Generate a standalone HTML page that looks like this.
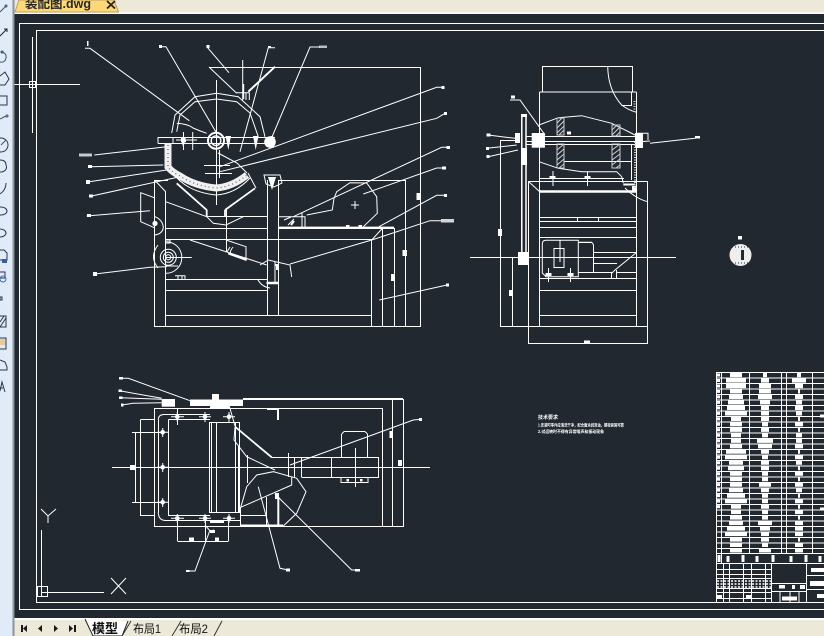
<!DOCTYPE html>
<html lang="zh">
<head>
<meta charset="utf-8">
<title>装配图.dwg</title>
<style>
html,body{margin:0;padding:0;background:#212830}
#a{position:relative;width:824px;height:636px;overflow:hidden;font-family:"Liberation Sans","Noto Sans CJK SC",sans-serif}
svg{position:absolute;left:0;top:0}
</style>
</head>
<body>
<div id="a">
<svg width="824" height="636" viewBox="0 0 824 636" xmlns="http://www.w3.org/2000/svg">
<rect width="824" height="636" fill="#212830"/>

<!-- CAD drawing -->
<g fill="none" stroke="#fff" stroke-width="1">
<!-- frames -->
<path d="M824 23.5H19.5V609.5H824M824 30.5H36.5V602.5H824" shape-rendering="crispEdges"/>
<!-- crosshair -->
<path d="M32.5 37V133M14 84.5H80" shape-rendering="crispEdges"/>
<rect x="29.5" y="81.5" width="6" height="6"/>
<!-- UCS -->
<path d="M41.5 530V597M41.5 592.5H104" shape-rendering="crispEdges"/>
<rect x="37.5" y="586.5" width="10" height="10"/>
<path d="M41 509L48 516L56 509M48 516V523M111 578L126 594M126 578L111 594"/>

<!-- FRONT VIEW: frame -->
<path shape-rendering="crispEdges" d="M154.5 180V326.5H420.5V67.5H209.5M165.5 191V326M278 180.5H405.5V326M371.5 239V326M382.5 228V326M394.5 228V326M154 180.5H168M165.5 315.5H372M165.5 290.5H267M165.5 279.5H267M165.5 239.5H372M165.5 228.5H267M267.5 180V316M278.5 180V316M207 216.5H267M226.5 210V252"/>
<path d="M154.5 180L165.5 191.5"/>
<path stroke-width="2.4" d="M278 227.8H394M266.5 283H278"/>
<!-- chute -->
<path stroke-width="1.8" d="M176.7 183.3L206.7 210V216.7M225 210L255 188.3M225 210V217"/>
<path d="M165.7 201.7L206.7 216.7L213.3 223.3L226 225L243.3 216.7"/>
<path d="M154.3 197.7L140.7 192.7V221.7L154.3 227.7M155 216.7Q163 220 163.3 228Q162 234 155 235"/>
<circle cx="155" cy="223.5" r="2.6" fill="#fff" stroke="none"/>
<!-- gear / pulley -->
<path d="M166 241.7A15.7 15.7 0 0 1 166 273.3M166 266H178M158 245Q149 257 158 268"/>
<circle cx="168.3" cy="257.3" r="8"/><circle cx="168.3" cy="257.3" r="5"/><circle cx="168.3" cy="257.3" r="2.5"/>
<path d="M166 257.5H191.7M165 240H170V243H165M175 275.7H185V279M178 275.7V279M182 275.7V279"/>
<path d="M190 240L266.7 265M226 240L246 246.7V258M230 247L227 252M233 247Q229 252 231 255"/>
<path stroke-width="2.2" d="M228.3 253.3L246.7 260"/>
<path d="M260 265L268.3 260L290 265L291.7 277M275 262V283M258 280Q262 287 270 288"/>
<path stroke-width="2" d="M275 265H277V270"/>
<!-- hopper -->
<path d="M209 67L236.7 93.3M242.7 60V100M236.7 92.7H249.3V100M243.7 84V99M246 93V100"/>
<path stroke-width="2" d="M275 66.7L248.3 91.7"/>
<!-- drum -->
<path d="M171.7 133L175 115L195 96.7L216.7 93.3L238.3 96.7L260 116.7L265 136.7M176.7 131.7L180 115L195 101.7L216.7 99L236.7 101.7L250 113L258.3 136.7M176.7 123.3Q188 124 193 128Q200 131 206.7 133.3"/>
<path shape-rendering="crispEdges" d="M216.5 80V205M158 137.5H275M158 143.5H275M158 137V143.5M173 137V144M204 165.5H230M205 173.5H232M219.5 150V178"/>
<circle cx="216" cy="140.7" r="8" stroke-width="2"/><circle cx="216" cy="140.7" r="4.8" stroke-width="1.4"/>
<path d="M183.5 132V150M192.7 132V150M176 140H197M218 153L237 163L247 173"/>
<path stroke-width="2.4" d="M181 141H186M272 136V148"/>
<path fill="#fff" stroke="none" d="M225.5 136H231L228.3 150ZM253 136H258.5L255.7 150ZM180.5 137H186L183.3 148ZM268 177H276L272 190Z"/>
<circle cx="270" cy="142" r="5.8" fill="#fff" stroke="none"/>
<path d="M264 175H280L282 183L274 187L266 184Z"/>
<!-- screen band -->
<path stroke="#f0f0f0" stroke-width="7" d="M168 143V167Q172 172 180 176Q195 186 216 188Q232 187 247 175"/>
<path stroke="#6f767c" stroke-width="1.4" stroke-dasharray="1 3" d="M168 145V167Q172 172 180 176Q195 186 216 188Q232 187 247 175"/>
<path d="M172 172Q186 192 216 195Q235 194 250 178M248 173L256 188"/>
<!-- leaders front -->
<path d="M85 48.3H90L189.3 120.7M159.3 46.7H166L216.7 133.3M207.3 47.3L229 72.7M268.3 47.7H275M268.3 47.7L240 151.7M320 47H310L272 137M94.3 155L166.7 146.7M90.7 166.7L163.3 165M89.3 181.7L166.7 170M91.7 196L180 176.7M86.7 216L150 210.7M95 274L150 267.3L166.7 266.7"/>
<path d="M220 166.7L436.7 87.3H442.7M220 171.7L436.7 118.3L445 113.3M293.3 216.7L441.7 147.3H448.3M363.3 194L436.7 168H443.3M379 226.7L436.7 195.3H445M290 264L371.7 240L430 220.7H441.7M371.7 240L382.7 228M379.3 300L447 285"/>
<g fill="#fff" stroke="none">
<rect x="79" y="153.5" width="13" height="3" opacity=".75"/><rect x="88" y="165" width="4" height="3"/><rect x="86" y="180" width="4" height="4"/><rect x="89" y="194.5" width="4" height="3"/><rect x="87" y="214" width="4" height="3"/><rect x="93" y="272" width="4" height="4"/>
<rect x="87" y="41" width="1.5" height="5"/><rect x="159" y="45" width="3" height="3"/><rect x="206.5" y="45" width="3" height="3"/><rect x="268" y="46" width="3" height="2"/><rect x="319" y="45.5" width="8" height="2.5" opacity=".7"/>
<rect x="441.5" y="86" width="3" height="3"/><rect x="444" y="112" width="3" height="3"/><rect x="446.5" y="146" width="3.5" height="3"/><rect x="442" y="166.5" width="4" height="3"/><rect x="444" y="194" width="3" height="3"/><rect x="441" y="219" width="13" height="3.5" opacity=".8"/><rect x="446" y="283.5" width="3" height="3"/>
<rect x="416.5" y="193" width="4" height="7"/><rect x="402.5" y="250" width="4.5" height="6"/><rect x="391" y="274" width="4" height="7"/>
<rect x="346" y="225" width="3.5" height="2.5"/><rect x="358.5" y="225" width="3.5" height="2.5"/>
</g>
<!-- motor front -->
<path d="M306.7 215L332.3 210L334 198.3L336.7 191.7L350 182.7L366.7 183L376.7 196.7L377.3 213.3L363.3 226.7M351 205H359M355 201V209M278.5 216.7H305V226.7M302 213V227M284 220L291 217M288 225L294 219"/>
<path stroke-width="2" d="M291 225L294 221"/>

<!-- RIGHT VIEW -->
<path shape-rendering="crispEdges" d="M542.5 92V66.5H632.5V92M539.5 92H636.5M539.5 92V326M636.5 92V326M528.5 181V343.5M647.5 181V343.5M528.5 181.5H647.5M500 326.5H647.5M528 343.5H648M539 178.5H624M539 217.5H636M539 221.5H636M539 227.5H636M539 237.5H636M539 278.5H636M539 290.5H636M539 315.5H636M577.5 217V221M598.5 217V221M470 257.5H676M526 136.5H638M526 141.5H638M526 144.5H638M564 161.5H632M631.5 144V180M621.5 105.5H631.5V92M500.5 140V326.5M512.5 257V326M500 140.5H516M554 248.5H564V267.5H554ZM560 240V262M578 242.5H591M578 272.5H612M593.5 245V272M593 252.5H636M593 263.5H617M611.5 272V278M616.5 270V278M616 272.5H636M553 171V186M587.5 172V186M548.5 268V282M570.5 268V282"/>
<path d="M607.7 66Q608 90 621.7 105Q628 110 636.7 112.3M528.5 181.5L539.5 191.5M539 125L558.3 117.7L581.7 115.7L611.7 123.3L635 135M539 161.7L558.3 168.3L581.7 171.7L616.7 171.7L621.7 176.7L623.3 183M625 188Q635 198 647.3 201.7M636.7 252.3L615 270L611.7 273.3M542.3 244Q542.3 240.3 546 240.3H578.3V276.7H546L542.3 273V244M578.3 242.3H591.7L593.7 245"/>
<path stroke-width="2.6" d="M539 191.5H636.7"/>
<path stroke-width="2" d="M623.3 184.5H635"/>
<path stroke-width="1.5" d="M521.8 115V262M526 115V262"/>
<g fill="#fff" stroke="none">
<rect x="521" y="114" width="6" height="3"/><rect x="521" y="148" width="6" height="17"/><rect x="518" y="252" width="10" height="13"/><rect x="531.7" y="133" width="13.3" height="14.7"/><rect x="515" y="133" width="5" height="10"/><rect x="635" y="133" width="8" height="15"/>
<rect x="549.5" y="176" width="6" height="3"/><rect x="584.5" y="176" width="6" height="3"/><rect x="545.5" y="273" width="6" height="3"/><rect x="567.5" y="273" width="6" height="3"/>
<rect x="498" y="229" width="4" height="7"/><rect x="509" y="290" width="3.5" height="6"/><rect x="584" y="340.5" width="6" height="3"/><rect x="567" y="131.5" width="4" height="3"/><rect x="632" y="186" width="5" height="6"/>
<rect x="486.5" y="133.5" width="4" height="3"/><rect x="486" y="147" width="3" height="3"/><rect x="486.5" y="155" width="3" height="3"/><rect x="511" y="95.5" width="4" height="3"/><rect x="695" y="136" width="5" height="2.5"/>
</g>
<path stroke="#cfd2d5" stroke-width="2" stroke-dasharray="1 1.5" d="M634.5 101V112M635 142V188"/>
<g stroke="#c8cbce" fill="none" stroke-width="1">
<path d="M557 118H564V135H557ZM557 144H564V168H557ZM612 125H620V136H612ZM612 144H620V168H612Z"/>
</g>
<g stroke="#cfd2d5" stroke-width="1">
<path d="M557 123L562 118M557 128L564 121M557 133L564 126M559 135L564 130M557 150L564 144M557 155L564 149M557 160L564 154M557 165L564 159M559 168L564 164M612 130L617 125M612 135L620 127M616 136L620 132M612 150L620 144M612 155L620 149M612 160L620 154M612 165L620 159M616 168L620 165"/>
</g>
<path d="M510 100H520L545 135M488 135L515 138.3M486.7 148.3L516.7 145M488.3 156.7L518 150M650 143.3L695 138.3L700 137M637 133.3H648V140M643 141.5L650 141"/>

<!-- detail circle -->
<circle cx="740.5" cy="255" r="11" fill="#eee" stroke="none"/>
<rect x="741" y="250" width="3" height="10" fill="#212830" stroke="none"/>
<path stroke="#212830" stroke-dasharray="1 2" d="M732 247H749M732 263H749"/>
<rect x="738" y="236" width="4" height="3.5" fill="#fff" stroke="none"/>

<!-- TOP VIEW -->
<path shape-rendering="crispEdges" d="M154.5 408.5H382.5V526.5H154.5ZM243 399.5H403.5V526.5H382M392.5 399V526M112 467.5H430M140.5 419.5H154M140.5 419.5V515.5H154M132 432.5H163M132 502.5H163M135.5 432V502M168.5 419.5H210M168.5 419.5V515.5H210M175 414.5H210M175 520.5H240M209.5 422.5H239.5V512.5H209.5ZM211.5 422V512M216.5 422V512M235.5 422V512M238.5 446V512M247.5 455V483M271.5 457.5H378.5V477.5H301.5M378.5 457V477M331.5 457V477M301.5 457V477M294.5 457V477M288.5 453V477M341.5 457V434M367.5 457V434M344 431.5H365M341 477V482.5H368V477M355.5 448V487M177.5 520V541M228.5 520V541M205.5 520V541M177.5 541.5H228.5M240.5 507V526M240.5 515.5H266M266.5 497V526M278 420V409.5H267M158.5 420V512M177.5 409V425"/>
<path stroke-width="2" d="M243 399H403M278 409V420M278.3 497V526M240.5 525.5H283"/>
<path d="M158.3 420Q158.3 414.5 164 414.5H176M158.3 512Q158.3 520.5 166 520.5H176M341.7 434L344 431.5M365 431.5L367.5 434"/>
<path stroke-width="1.8" d="M235 426.7L271.7 457.3"/>
<path d="M235 426.7L234 440L246.7 456.7L275 470M240.7 507.3L246.7 486.7L256.7 475L273.3 471.7L296.7 478.3L306 491.7L296.7 513.3L283.3 526M240.7 507.3L291.7 485V476.7M229 405L235 426M258.3 486.7L280 568.3L288 570M275 494L351.7 570H358M290 465L413.3 420L421.7 419.3M210 530L195 571H186M120 378.3H128.3L190 400.7M119.3 390.7L161.7 398.3M120 397.7L161.7 399.3M121.7 405L133 403.3L161.7 402.7M205 525L210 531L214 530"/>
<g fill="#fff" stroke="none">
<rect x="190" y="399.5" width="53" height="6.5"/><rect x="161.7" y="399" width="13.3" height="7.7"/><rect x="212" y="394" width="7" height="12"/><rect x="210" y="406" width="20" height="3"/>
<rect x="210" y="520" width="14" height="3"/><rect x="210" y="530" width="5" height="3"/><rect x="189" y="537.5" width="5" height="3.5"/><rect x="215" y="537.5" width="4" height="3.5"/><rect x="130" y="465" width="5" height="5"/><rect x="389.5" y="431" width="3" height="7"/><rect x="398" y="460" width="4" height="6"/>
<rect x="119" y="377" width="4" height="2.5"/><rect x="118.5" y="389.5" width="3.5" height="2.5"/><rect x="119" y="396.5" width="3.5" height="2.5"/><rect x="121" y="403.5" width="2.5" height="3"/><rect x="186" y="570" width="3.5" height="2"/><rect x="286" y="568.5" width="4" height="3"/><rect x="355" y="569" width="5" height="2.5"/><rect x="419" y="418" width="3" height="3"/><rect x="346.5" y="479" width="2.5" height="2.5"/><rect x="360" y="479" width="2.5" height="2.5"/>
<rect x="275" y="493" width="4" height="6"/>
</g>
<g>
<path d="M171 416.7H184M177.3 412V422M199 416.7H211M205 412V422M223 416.7H235M229 412V422M171 518.3H184M177.3 514V523M199 518.3H211M205 514V523M223 518.3H235M229 514V523M157 432.3H168M162.7 428V437M157 467.3H168M162.7 463V472M157 502.3H168M162.7 498V507"/>
<g fill="#fff" stroke="none"><circle cx="177.3" cy="416.7" r="2.3"/><circle cx="205" cy="416.7" r="2.3"/><circle cx="229" cy="416.7" r="2.3"/><circle cx="177.3" cy="518.3" r="2.3"/><circle cx="205" cy="518.3" r="2.3"/><circle cx="229" cy="518.3" r="2.3"/><circle cx="162.7" cy="432.3" r="2.3"/><circle cx="162.7" cy="467.3" r="2.3"/><circle cx="162.7" cy="502.3" r="2.3"/></g>
</g>

<!-- TABLE -->
<path shape-rendering="crispEdges" d="M716.5 372V602M721.5 372V563M749.5 372V553M781.5 372V553M786.5 372V553M812.5 372V553"/>
<path shape-rendering="crispEdges" d="M716 372.5H824M716 378H824M716 383.5H824M716 389H824M716 394.5H824M716 400H824M716 405.5H824M716 411H824M716 416.5H824M716 422H824M716 427.5H824M716 433H824M716 438.5H824M716 444H824M716 449.5H824M716 455H824M716 460.5H824M716 466H824M716 471.5H824M716 477H824M716 482.5H824M716 488H824M716 493.5H824M716 499H824M716 504.5H824M716 510H824M716 515.5H824M716 521H824M716 526.5H824M716 532H824M716 537.5H824M716 543H824M716 548.5H824M716 553.5H824M716 563.5H824"/>
<g stroke-width="4.2" stroke="#fff">
<path d="M730 375h12M726 380.5h20M726 386h20M730 391.4h12M729 396.9h14M728 402.4h16M727 407.9h18M725 413.4h22M731 418.9h10M730 424.3h12M730 429.8h12M731 435.3h10M731 440.8h10M730 446.3h12M726 451.7h20M725 457.2h22M729 462.7h14M728 468.2h16M730 473.7h12M730 479.2h12M730 484.6h12M729 490.1h14M727 495.6h18M725 501.1h22M731 506.6h10M731 512h10M730 517.5h12M729 523h14M727 528.5h18M725 534h22M730 539.5h12M730 544.9h12M730 550.4h12"/>
<path d="M763 375h4M761 380.5h8M759 386h12M759 391.4h12M758 396.9h14M760 402.4h10M761 407.9h8M761 413.4h8M761 418.9h8M762 424.3h6M761 429.8h8M762 435.3h6M757 440.8h16M758 446.3h14M761 451.7h8M762 457.2h6M761 462.7h8M761 468.2h8M762 473.7h6M762 479.2h6M759 484.6h12M761 490.1h8M762 495.6h6M762 501.1h6M761 506.6h8M762 512h6M762 517.5h6M758 523h14M760 528.5h10M761 534h8M761 539.5h8M762 544.9h6M759 550.4h12"/>
<path d="M797 375h4M792 380.5h14M795 386h8M798 391.4h2M795 396.9h8M796 402.4h6M795 407.9h8M796 413.4h6M798 418.9h2M795 424.3h8M798 429.8h2M796 435.3h6M796 440.8h6M795 446.3h8M798 451.7h2M795 457.2h8M796 462.7h6M798 468.2h2M795 473.7h8M798 479.2h2M795 484.6h8M796 490.1h6M798 495.6h2M795 501.1h8M798 506.6h2M795 512h8M798 517.5h2M795 523h8M795 528.5h8M795 534h8M798 539.5h2M795 544.9h8M795 550.4h8"/>
<path d="M717 375h3M717 380.5h3M717 386h3M717 391.4h3M717 396.9h3M717 402.4h3M717 407.9h3M717 413.4h3M717 418.9h3M717 424.3h3M717 429.8h3M717 435.3h3M717 440.8h3M717 446.3h3M717 451.7h3M717 457.2h3M717 462.7h3M717 468.2h3M717 473.7h3M717 479.2h3M717 484.6h3M717 490.1h3M717 495.6h3M717 501.1h3M717 506.6h3" stroke-width="3"/>
<path d="M820 416h4M820 509h4" stroke-width="3"/>
</g>
<!-- table header ticks -->
<path stroke-width="3" d="M719 555V562M728 556V562M743 555V562M757 556V562M773 555V562M791 556V562M806 555V562M820 556V562"/>
<!-- title block -->
<path shape-rendering="crispEdges" d="M716 569.5H772M716 574.5H772M716 578.5H772M716 588.5H772M716 592.5H772M716 598.5H772M716 602.5H824M723.5 563V602M729.5 563V602M743.5 563V602M751.5 563V602M765.5 563V602M771.5 563V602M806.5 563V602M807 575.5H824M807 589.5H824M772 583.5H807M772 591.5H807M780 591V602M790 591V602M799 591V602"/>
<g stroke="#fff" stroke-width="1.6" stroke-dasharray="2 1.5">
<path d="M717 581H771M717 584H771M717 587H771"/>
</g>
<g fill="#fff" stroke="none">
<rect x="717" y="595" width="5" height="3"/><rect x="746" y="595" width="5" height="3"/><rect x="779" y="585" width="6" height="3.5"/><rect x="792" y="585" width="3" height="4"/><rect x="800" y="585" width="5" height="4"/>
<rect x="782" y="596.5" width="15" height="4"/><rect x="811" y="568" width="13" height="4"/><rect x="810" y="581" width="14" height="5"/><rect x="817" y="594" width="7" height="4"/>
</g>
</g>

<!-- tech notes -->
<g fill="#fff" font-family="'Liberation Sans','Noto Sans CJK SC',sans-serif" font-weight="700">
<text x="538" y="419" font-size="5">技术要求</text>
<text x="538" y="426.5" font-size="4.2" textLength="86" lengthAdjust="spacingAndGlyphs">1.安装时零件应清洗干净，配合面涂润滑油，螺栓紧固可靠</text>
<text x="538" y="433" font-size="4.2" textLength="66" lengthAdjust="spacingAndGlyphs">2.试运转时不得有异常噪声和振动现象</text>
</g>
</svg>

<!-- top chrome -->
<div style="position:absolute;left:0;top:0;width:824px;height:12px;background:#ece9d8"></div>
<div style="position:absolute;left:0;top:12px;width:824px;height:2px;background:#f8f8f4"></div>
<svg width="824" height="14" style="top:0">
<path d="M15 12L19 0H114L118.5 12Z" fill="#fcd878" stroke="#b9a063" stroke-width="1"/>
<text x="25" y="8" font-size="12.5" font-weight="700" fill="#2a2a24" font-family="'Liberation Sans','Noto Sans CJK SC',sans-serif">装配图.dwg</text>
<path d="M107 1L115 8.5M115 1L107 8.5" stroke="#222" stroke-width="1.8"/>
</svg>

<!-- left toolbar -->
<svg width="15" height="636" style="top:0">
<rect width="13" height="636" fill="#e0ebf7"/>
<rect x="12.5" y="0" width="2" height="636" fill="#8d949b"/>
<g fill="none" stroke="#3a5573" stroke-width="1">
<path d="M0 12L6 6"/><circle cx="6" cy="6" r="1"/>
<path d="M0 36L7 29M4 29H7V32" stroke="#222"/>
<path d="M1 52Q7 53 6 58Q5 63 0 62"/><circle cx="2" cy="52" r="1"/>
<path d="M0 76L5 72L9 79L5 85H0" stroke="#25384e"/>
<rect x="-2" y="96" width="9" height="9" stroke="#25384e"/>
<path d="M0 119L6 116"/><circle cx="7" cy="116" r="1"/>
<circle cx="1" cy="145" r="7" stroke="#25384e"/><path d="M1 145L6 140"/>
<path d="M0 160Q6 160 6 165Q8 170 2 172H0" stroke="#25384e"/>
<path d="M0 194Q6 190 6 183" stroke="#25384e"/>
<ellipse cx="1" cy="211" rx="6" ry="4" stroke="#25384e"/>
<ellipse cx="0" cy="233" rx="6" ry="4" stroke="#25384e"/>
<path d="M0 250H4L7 253V260H0" stroke="#25384e"/>
<rect x="2" y="259" width="5" height="4" fill="#3a5f96" stroke="none"/>
<path d="M0 272H5V278H0" stroke="#25384e"/><circle cx="3" cy="279" r="3" stroke="#4a6ea8"/>
<rect x="0" y="297" width="2" height="3" stroke="#25384e"/>
<rect x="-1" y="316" width="7" height="11" stroke="#25384e"/><path d="M0 327L6 318M0 322L4 316" stroke="#25384e"/>
<rect x="-1" y="338" width="7" height="11" stroke="#25384e"/><rect x="0" y="339" width="5" height="6" fill="#e8c9a0" stroke="none"/>
<path d="M0 360L5 362L7 367V370H0" stroke="#25384e"/>
<path d="M0 391L2 382L5 392M0 388H3" stroke="#25384e"/>
</g>
</svg>

<!-- bottom tab bar -->
<div style="position:absolute;left:14px;top:618px;width:810px;height:2px;background:#fff"></div>
<svg width="824" height="18" style="top:618px;left:0">
<rect x="14" y="2" width="810" height="16" fill="#ece9d8"/>
<rect width="13" height="18" fill="#e0ebf7"/>
<rect x="12.5" y="0" width="2" height="18" fill="#8d949b"/>
<g fill="#1a1a1a">
<path d="M21 7V14H23V7ZM23 10.5L27 7V14ZM38 10.5L42 7V14ZM54 7V14L58 10.5ZM69 7V14L73 10.5ZM74 7H76V14H74Z"/>
</g>
<path d="M85 1L93 18H122L128 3" fill="#fff" stroke="#222"/>
<path d="M122 18L131 3M172 18L181 3M214 18L222 3" fill="none" stroke="#333"/>
<g font-family="'Liberation Sans','Noto Sans CJK SC',sans-serif" fill="#111">
<text x="92" y="15" font-size="13" font-weight="700">模型</text>
<text x="133" y="15" font-size="12" textLength="28" lengthAdjust="spacingAndGlyphs">布局1</text>
<text x="179" y="15" font-size="12" textLength="29" lengthAdjust="spacingAndGlyphs">布局2</text>
</g>
</svg>
</div>
</body>
</html>
